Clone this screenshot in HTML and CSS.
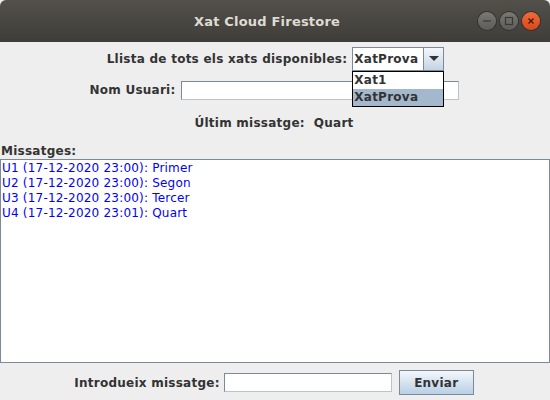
FILE: index.html
```html
<!DOCTYPE html>
<html>
<head>
<meta charset="utf-8">
<link rel="stylesheet" href="styles.css">
</head>
<body>
<div class="window">
  <div class="titlebar">
    <span class="title">Xat Cloud Firestore</span>
    <div class="wbtns">
      <span class="wbtn"><svg width="18" height="18" viewBox="0 0 18 18"><line x1="5" y1="9" x2="13" y2="9" stroke="#3a3935" stroke-width="1.2"/></svg></span>
      <span class="wbtn"><svg width="18" height="18" viewBox="0 0 18 18"><rect x="5.5" y="5.5" width="7" height="7" fill="none" stroke="#3a3935" stroke-width="1.2"/></svg></span>
      <span class="wbtn close"><svg width="18" height="18" viewBox="0 0 18 18"><path d="M6.5 6.5 L11.5 11.5 M11.5 6.5 L6.5 11.5" stroke="#3a1a0e" stroke-width="1.3"/></svg></span>
    </div>
  </div>
  <div class="content">
    <div class="row row1">
      <span class="label">Llista de tots els xats disponibles:</span>
      <div class="combo">
        <span class="combo-value">XatProva</span>
        <span class="combo-arrow"><svg width="10" height="6" viewBox="0 0 10 6"><path d="M0 0 H10 L5 5 Z" fill="#333"/></svg></span>
        <div class="popup">
          <div class="item">Xat1</div>
          <div class="item selected">XatProva</div>
        </div>
      </div>
    </div>
    <div class="row row2">
      <span class="label">Nom Usuari:</span>
      <span class="field user"></span>
    </div>
    <div class="row row3">
      <span class="label">Últim missatge:</span>
      <span class="label">Quart</span>
    </div>
    <div class="msgs-label label">Missatges:</div>
    <div class="textarea">
      <div>U1 (17-12-2020 23:00): Primer</div>
      <div>U2 (17-12-2020 23:00): Segon</div>
      <div>U3 (17-12-2020 23:00): Tercer</div>
      <div>U4 (17-12-2020 23:01): Quart</div>
    </div>
    <div class="row row4">
      <span class="label">Introdueix missatge:</span>
      <span class="field msg"></span>
      <span class="button">Enviar</span>
    </div>
  </div>
</div>
</body>
</html>
```
FILE: styles.css
```css
html, body {
  margin: 0;
  padding: 0;
  background: #eeeeee;
}
.window {
  width: 550px;
  height: 400px;
  display: flex;
  flex-direction: column;
  font-family: "DejaVu Sans", sans-serif;
  font-size: 12px;
  color: #333333;
}
.titlebar {
  height: 42px;
  flex: none;
  background: linear-gradient(#53504a, #3e3d39);
  border-radius: 6px 6px 0 0;
  display: flex;
  align-items: center;
  justify-content: center;
  padding-right: 16px;
  position: relative;
}
.title {
  font-family: "DejaVu Sans", sans-serif;
  font-weight: bold;
  font-size: 13px;
  letter-spacing: 0.2px;
  color: #dfdbd2;
  margin-top: 1px;
}
.wbtns {
  position: absolute;
  right: 10px;
  top: 12px;
  display: flex;
  gap: 4px;
}
.wbtn {
  width: 18px;
  height: 18px;
  border-radius: 50%;
  background: linear-gradient(#7a7873, #5e5c58);
  box-shadow: 0 0 0 1px #34332f;
  display: flex;
}
.wbtn.close {
  background: linear-gradient(#f2693a, #d9481a);
}
.content {
  flex: 1;
  display: flex;
  flex-direction: column;
}
.row {
  display: flex;
  justify-content: center;
  align-items: center;
}
.label {
  font-weight: bold;
  white-space: nowrap;
  letter-spacing: 0.25px;
}
.row1 {
  margin-top: 5px;
  height: 24px;
  gap: 5px;
  padding-left: 1px;
}
.combo {
  position: relative;
  width: 92px;
  height: 24px;
  box-sizing: border-box;
  border: 1px solid #7a8a99;
  display: flex;
  background: #ffffff;
}
.combo-value {
  flex: 1;
  font-weight: bold;
  letter-spacing: 0.25px;
  padding-left: 1px;
  line-height: 22px;
  border-right: 1px solid #7a8a99;
}
.combo-arrow {
  width: 19px;
  display: flex;
  align-items: center;
  justify-content: center;
  background: linear-gradient(#f3f7fb, #c4d4e4);
}
.popup {
  position: absolute;
  left: -1px;
  top: 23px;
  width: 92px;
  box-sizing: border-box;
  border: 1px solid #000000;
  background: #ffffff;
}
.item {
  height: 17px;
  line-height: 17px;
  font-weight: bold;
  letter-spacing: 0.25px;
  padding-left: 1px;
}
.item.selected {
  background: #a3b8cc;
}
.row2 {
  margin-top: 9px;
  height: 20px;
  gap: 5px;
  padding-right: 2px;
}
.field {
  height: 19px;
  box-sizing: border-box;
  background: #ffffff;
  border: 1px solid #7a8a99;
  border-right-color: #b8c4d0;
  border-bottom-color: #b8c4d0;
}
.field.user {
  width: 278px;
}
.row3 {
  margin-top: 15px;
  height: 16px;
  gap: 9px;
  padding-right: 2px;
}
.msgs-label {
  margin-top: 12px;
  height: 16px;
  line-height: 16px;
  padding-left: 1px;
}
.textarea {
  height: 204px;
  box-sizing: border-box;
  border: 1px solid #7a8a99;
  background: #ffffff;
  color: #0000ff;
  line-height: 15px;
  padding-left: 1px;
  padding-top: 1px;
  letter-spacing: 0.2px;
}
.row4 {
  margin-top: 7px;
  height: 25px;
  gap: 4px;
  padding-right: 2px;
}
.field.msg {
  width: 168px;
  margin-right: 3px;
}
.button {
  width: 75px;
  height: 25px;
  box-sizing: border-box;
  border: 1px solid #7a8a99;
  background: linear-gradient(#f3f7fb, #b8cfe5);
  font-weight: bold;
  letter-spacing: 0.25px;
  display: flex;
  align-items: center;
  justify-content: center;
}
```
